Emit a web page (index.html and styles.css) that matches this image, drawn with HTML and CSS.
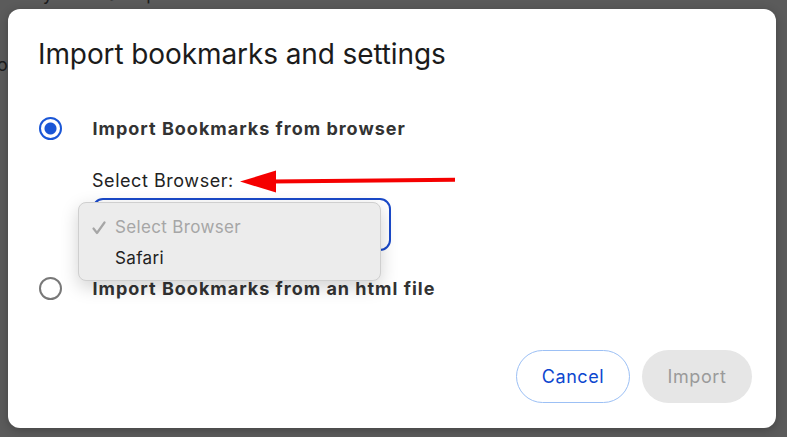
FILE: index.html
```html
<!DOCTYPE html>
<html lang="en">
<head>
    <meta charset="UTF-8">
    <meta name="viewport" content="width=device-width, initial-scale=1.0">
    <title>Import bookmarks and settings</title>
    <link rel="stylesheet" href="styles.css">
</head>
<body>
    <!-- Page behind the modal -->
    <div class="page-behind">
        <p class="behind-line">to your Island profile</p>
        <p class="behind-side">o</p>
    </div>

    <!-- Import dialog -->
    <div class="dialog">
        <h1 class="dialog-title">Import bookmarks and settings</h1>

        <div class="options">
            <div class="option">
                <span class="radio radio-checked"></span>
                <span class="option-label">Import Bookmarks from browser</span>
            </div>

            <div class="browser-picker">
                <div class="picker-label">
                    Select Browser:
                    <!-- Annotation arrow -->
                    <svg class="arrow" width="220" height="24" viewBox="0 0 220 24">
                        <path d="M32 10.4 L215 8.8 L215 12.8 L32 14.6 Z" fill="#f50000"/>
                        <path d="M0 12.6 L36 1.5 L36 23.5 Z" fill="#f50000"/>
                    </svg>
                </div>
                <div class="select-box">
                    <!-- Open native menu -->
                    <ul class="select-menu">
                        <li class="menu-item menu-item-selected">
                            <svg class="check" width="14" height="14" viewBox="0 0 14 14">
                                <path d="M1.5 7.5 L5 12 L12.5 1.5" fill="none" stroke="#a6a6a6" stroke-width="2.2" stroke-linecap="round" stroke-linejoin="round"/>
                            </svg>
                            Select Browser
                        </li>
                        <li class="menu-item">Safari</li>
                    </ul>
                </div>
            </div>

            <div class="option">
                <span class="radio"></span>
                <span class="option-label">Import Bookmarks from an html file</span>
            </div>
        </div>

        <div class="dialog-actions">
            <button class="btn btn-cancel">Cancel</button>
            <button class="btn btn-import" disabled>Import</button>
        </div>
    </div>
</body>
</html>
```

FILE: styles.css
```css
/* Basic reset */
* {
    margin: 0;
    padding: 0;
    box-sizing: border-box;
}

body {
    font-family: Inter, 'Liberation Sans', Arial, sans-serif;
    background-color: #5b5b5b;
    color: #333;
    width: 787px;
    height: 437px;
    overflow: hidden;
    position: relative;
}

/* Dimmed page behind */
.page-behind {
    color: #1c1c1c;
    font-size: 18px;
}

.behind-line {
    position: absolute;
    left: 20px;
    top: -17px;
    letter-spacing: 0.4px;
}

.behind-side {
    position: absolute;
    left: -3px;
    top: 54px;
}

/* Dialog */
.dialog {
    position: absolute;
    left: 8px;
    top: 9px;
    width: 768px;
    height: 419px;
    background-color: #fff;
    border-radius: 12px;
    box-shadow: 0 2px 10px rgba(0, 0, 0, 0.25);
    padding: 28px 24px 25px 30px;
    display: flex;
    flex-direction: column;
}

.dialog-title {
    font-size: 28px;
    font-weight: 400;
    color: #1b1b1b;
    line-height: 34px;
    letter-spacing: -0.1px;
}

.options {
    margin-top: 44px;
    display: flex;
    flex-direction: column;
}

.option {
    display: flex;
    align-items: center;
    gap: 31px;
    height: 26px;
}

.radio {
    width: 23px;
    height: 23px;
    border-radius: 50%;
    border: 2.5px solid #787878;
    margin-left: 0.5px;
    flex-shrink: 0;
}

.radio-checked {
    border-color: #1a56d6;
    background: radial-gradient(circle, #1a56d6 0 5.5px, #fff 6.5px);
}

.option-label {
    font-size: 18px;
    font-weight: 700;
    color: #333;
    letter-spacing: 1px;
}

/* Browser select */
.browser-picker {
    padding-left: 54px;
    padding-top: 29px;
    padding-bottom: 24px;
}

.picker-label {
    position: relative;
    font-size: 18px;
    color: #222;
    line-height: 22px;
    letter-spacing: 0.55px;
    display: inline-block;
}

.arrow {
    position: absolute;
    left: calc(100% + 6px);
    top: -1px;
}

.select-box {
    position: relative;
    margin-top: 6px;
    width: 299px;
    height: 53px;
    border: 2px solid #1a49c9;
    border-radius: 11px;
}

.select-menu {
    position: absolute;
    left: -16px;
    top: 2px;
    width: 303px;
    height: 79px;
    list-style: none;
    background-color: #ececec;
    border: 1px solid #cfcfcf;
    border-radius: 8px;
    box-shadow: 0 6px 18px rgba(0, 0, 0, 0.18);
    padding-top: 9px;
}

.menu-item {
    font-size: 17px;
    color: #222;
    line-height: 31px;
    padding-left: 36px;
    letter-spacing: 0.35px;
    position: relative;
}

.menu-item-selected {
    color: #a6a6a6;
}

.check {
    position: absolute;
    left: 13px;
    top: 9px;
}

/* Footer buttons */
.dialog-actions {
    margin-top: auto;
    display: flex;
    justify-content: flex-end;
    gap: 12px;
}

.btn {
    font-family: inherit;
    font-size: 18px;
    letter-spacing: 0.6px;
    height: 53px;
    border-radius: 27px;
    cursor: pointer;
}

.btn-cancel {
    width: 114px;
    background-color: #fff;
    color: #0c47cf;
    border: 1px solid #9cc0f5;
}

.btn-import {
    width: 110px;
    background-color: #e6e6e6;
    color: #9a9a9a;
    border: none;
}
```
